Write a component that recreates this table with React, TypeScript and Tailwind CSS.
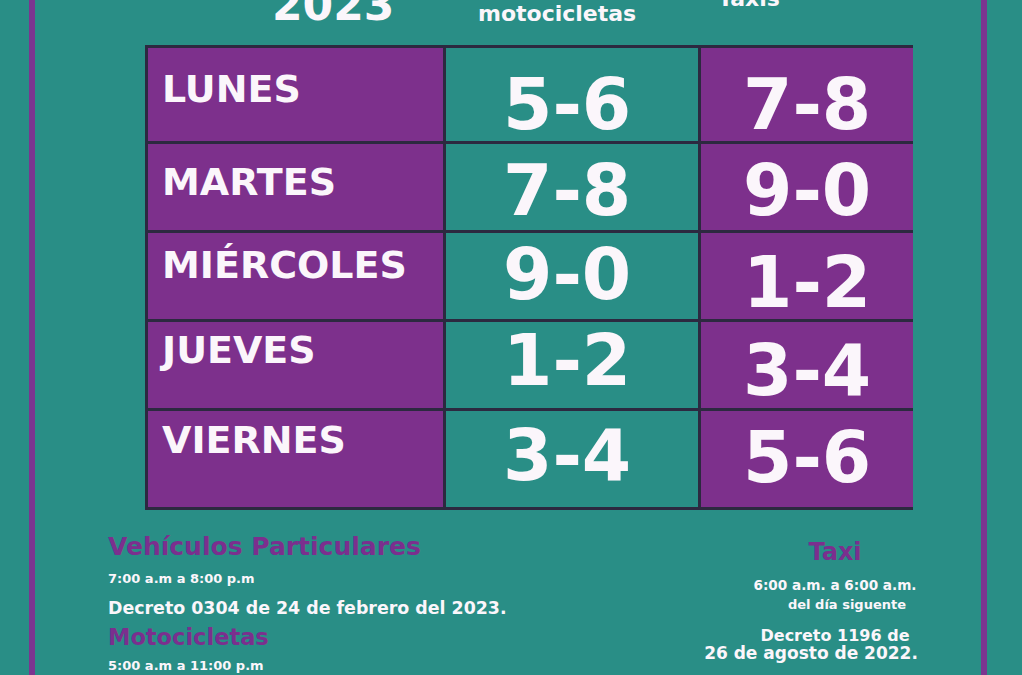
import React from 'react'

type Row = {
  day: string
  moto: string
  taxi: string
  h: string
  dayPt: string
  motoPt: string
  taxiPt: string
}

const ROWS: Row[] = [
  { day: 'LUNES', moto: '5-6', taxi: '7-8', h: 'h-[96px] border-b-[3px]', dayPt: 'pt-[22px]', motoPt: 'pt-[21px]', taxiPt: 'pt-[21px]' },
  { day: 'MARTES', moto: '7-8', taxi: '9-0', h: 'h-[89px] border-b-[3px]', dayPt: 'pt-[19px]', motoPt: 'pt-[11px]', taxiPt: 'pt-[11px]' },
  { day: 'MIÉRCOLES', moto: '9-0', taxi: '1-2', h: 'h-[89px] border-b-[3px]', dayPt: 'pt-[13px]', motoPt: 'pt-[6px]', taxiPt: 'pt-[14px]' },
  { day: 'JUEVES', moto: '1-2', taxi: '3-4', h: 'h-[89px] border-b-[3px]', dayPt: 'pt-[9px]', motoPt: 'pt-[3px]', taxiPt: 'pt-[13px]' },
  { day: 'VIERNES', moto: '3-4', taxi: '5-6', h: 'h-[96px]', dayPt: 'pt-[10px]', motoPt: 'pt-[9px]', taxiPt: 'pt-[11px]' },
]

export default function App() {
  return (
    <div className="w-[1022px] h-[675px] overflow-hidden bg-[#298e86] font-['DejaVu_Sans',sans-serif] font-bold text-[#fbf6fb]">
      <div className="ml-[29px] w-[958px] h-full border-x-[6px] border-[#7b3590]">
        {/* Column headings (cut at the top) */}
        <div className="h-[45px] flex items-start pl-[237px]">
          <div className="w-[206px] shrink-0">
            <div className="-mt-[17px] text-[44px] leading-none">2023</div>
          </div>
          <div className="w-[240px] shrink-0">
            <div className="mt-[3px] text-[22px] leading-none">motocicletas</div>
          </div>
          <div>
            <div className="-mt-[12px] text-[22px] leading-none">Taxis</div>
          </div>
        </div>

        {/* Table */}
        <div className="ml-[110px] w-[768px] border-l-[3px] border-y-[3px] border-[#2c2940]">
          {ROWS.map((r) => (
            <div key={r.day} className={`flex border-[#2c2940] ${r.h}`}>
              <div className={`w-[298px] shrink-0 bg-[#7d308c] border-r-[3px] border-[#2c2940] pl-[14px] text-[38px] leading-none ${r.dayPt}`}>
                {r.day}
              </div>
              <div className={`w-[255px] shrink-0 bg-[#298e86] border-r-[3px] border-[#2c2940] pl-[57px] text-[71px] leading-none ${r.motoPt}`}>
                {r.moto}
              </div>
              <div className={`flex-1 bg-[#7d308c] pl-[42px] text-[71px] leading-none ${r.taxiPt}`}>
                {r.taxi}
              </div>
            </div>
          ))}
        </div>

        {/* Schedules and decrees */}
        <div className="flex">
          <div className="w-[670px] shrink-0 pl-[73px] flex flex-col items-start whitespace-nowrap">
            <div className="mt-[24px] text-[25px] leading-none text-[#7b2f8e]">Vehículos Particulares</div>
            <div className="mt-[13px] text-[13px] leading-none">7:00 a.m a 8:00 p.m</div>
            <div className="mt-[15px] text-[17.4px] leading-none">Decreto 0304 de 24 de febrero del 2023.</div>
            <div className="mt-[9px] text-[22.5px] leading-none text-[#7b2f8e]">Motocicletas</div>
            <div className="mt-[10px] text-[13px] leading-none">5:00 a.m a 11:00 p.m</div>
          </div>
          <div className="w-[260px] shrink-0 flex flex-col items-center whitespace-nowrap">
            <div className="mt-[30px] text-[24px] leading-none text-[#7b2f8e]">Taxi</div>
            <div className="mt-[15px] text-[13.6px] leading-none">6:00 a.m. a 6:00 a.m.</div>
            <div className="mt-[5px] pl-[24px] text-[13px] leading-none">del día siguente</div>
            <div className="mt-[17px] text-[16px] leading-none">Decreto 1196 de</div>
            <div className="mt-[1px] pr-[48px] text-[17px] leading-none">26 de agosto de 2022.</div>
          </div>
        </div>
      </div>
    </div>
  )
}
